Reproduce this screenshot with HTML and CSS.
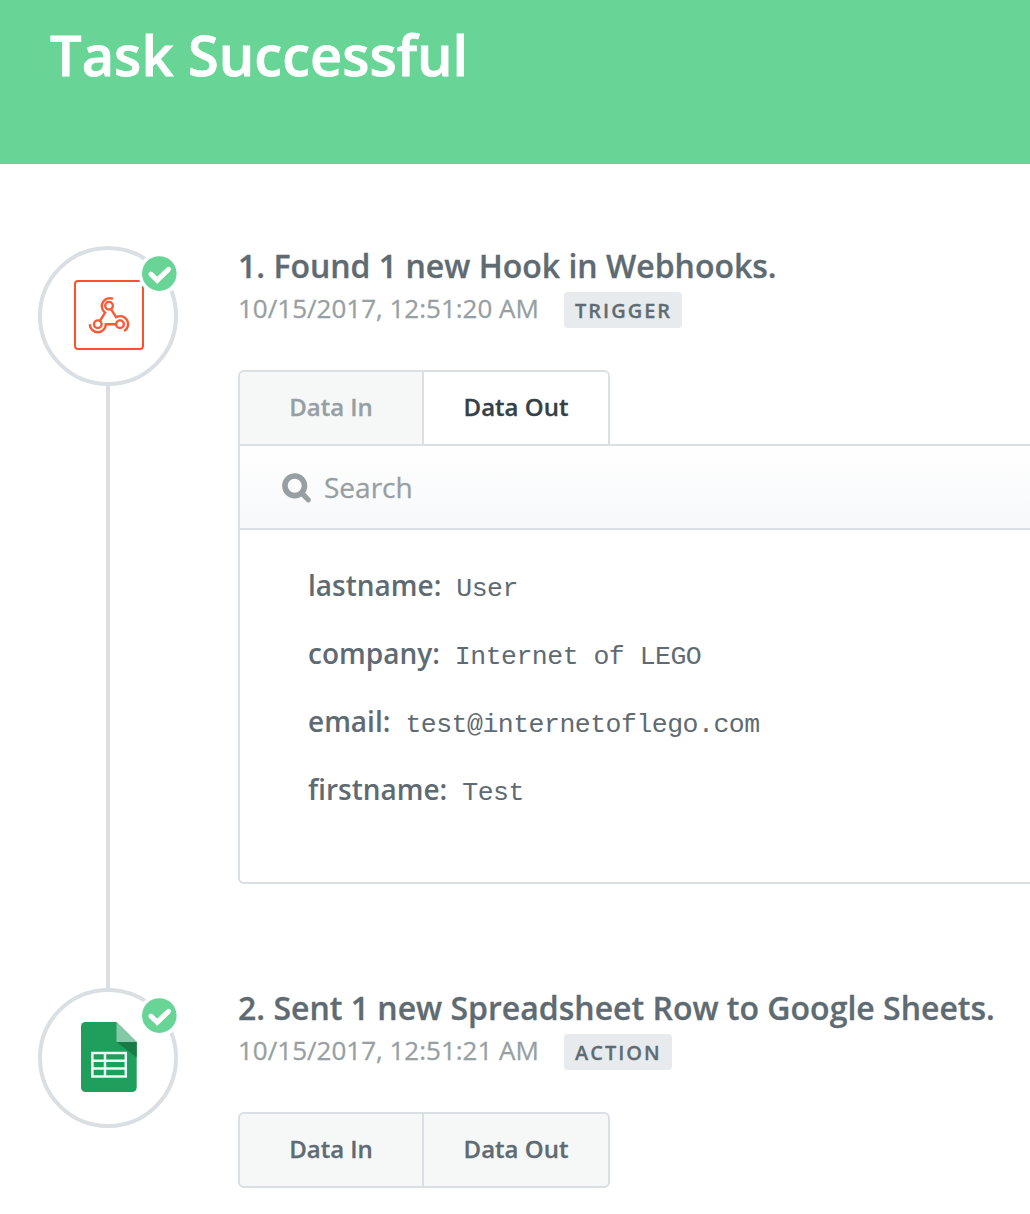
FILE: index.html
```html
<!DOCTYPE html>
<html lang="en">
<head>
<meta charset="utf-8">
<title>Task Successful</title>
<link rel="stylesheet" href="styles.css">
</head>
<body>
<header class="banner"><h1 class="banner-title">Task Successful</h1></header>
<main class="steps">
  <section class="step step-first">
    <div class="rail">
      <svg class="node" width="140" height="140" viewBox="0 0 140 140" fill="none">
        <circle cx="70" cy="70" r="68" stroke="#d9dfe2" stroke-width="4"/>
        <rect x="37" y="35" width="68" height="68" rx="3" stroke="#fc522c" stroke-width="2"/>
        <g stroke="#f85a35" stroke-width="2.4">
          <circle cx="71" cy="59.7" r="3.8"/><circle cx="59.8" cy="78.2" r="3.8"/><circle cx="82" cy="78.2" r="3.8"/>
          <path d="M75 52.8A8 8 0 0 0 67.1 66.6L61.9 75"/>
          <path d="M51.8 78.2A8 8 0 0 0 67.8 78.2H78"/>
          <path d="M73 63.1L78.1 71.2A8 8 0 0 1 86.2 85"/>
        </g>
        <circle cx="121.3" cy="27.6" r="21" fill="#fff"/>
        <circle cx="121.3" cy="27.6" r="17.3" fill="#68d597"/>
        <path d="M112.8 28L119.2 34.2L130.7 23.2" stroke="#fff" stroke-width="5"/>
        <path d="M112.8 28L119.2 34.2L130.7 23.2" stroke="#fff" stroke-width="4.6" stroke-linecap="round"/>
      </svg>
      <div class="line"></div>
    </div>
    <div class="content">
      <h2 class="step-title">1. Found 1 new Hook in Webhooks.</h2>
      <div class="meta"><span class="date">10/15/2017, 12:51:20 AM</span><span class="tag tag-trigger">TRIGGER</span></div>
      <div class="tabs tabs-open"><div class="tab tab-in muted">Data In</div><div class="tab active">Data Out</div></div>
      <div class="panel">
        <div class="search">
          <svg class="search-icon" width="30" height="32" viewBox="0 0 30 32" fill="none" stroke="#979fa3">
            <circle cx="12.7" cy="14.8" r="9.8" stroke-width="5.6"/><path d="M20 22.4L26.2 28.8" stroke-width="5.2" stroke-linecap="round"/>
          </svg>
          <span>Search</span>
        </div>
        <dl class="fields">
          <div class="field"><dt>lastname:</dt><dd>User</dd></div>
          <div class="field"><dt>company:</dt><dd>Internet of LEGO</dd></div>
          <div class="field"><dt>email:</dt><dd>test@internetoflego.com</dd></div>
          <div class="field"><dt>firstname:</dt><dd>Test</dd></div>
        </dl>
      </div>
    </div>
  </section>
  <section class="step">
    <div class="rail">
      <svg class="node" width="140" height="140" viewBox="0 0 140 140" fill="none">
        <circle cx="70" cy="70" r="68" stroke="#d9dfe2" stroke-width="4"/>
        <path d="M47.5 34H78.5L98.7 54V99.5a4.5 4.5 0 0 1-4.5 4.5H47.5a4.5 4.5 0 0 1-4.5-4.5V38.5a4.5 4.5 0 0 1 4.5-4.5Z" fill="#209e5b"/>
        <path d="M78.5 54H98.7V69.5Z" fill="#187b45"/>
        <path d="M78.5 34L98.7 54H78.5Z" fill="#84caa6"/>
        <path d="M54.4 65H87.8V88.4H54.4ZM54 72.7H88M54 80.5H88M67 65V88" stroke="#eef7f2" stroke-width="2.5"/>
        <circle cx="121.3" cy="27.6" r="21" fill="#fff"/>
        <circle cx="121.3" cy="27.6" r="17.3" fill="#68d597"/>
        <path d="M112.8 28L119.2 34.2L130.7 23.2" stroke="#fff" stroke-width="5"/>
        <path d="M112.8 28L119.2 34.2L130.7 23.2" stroke="#fff" stroke-width="4.6" stroke-linecap="round"/>
      </svg>
    </div>
    <div class="content">
      <h2 class="step-title">2. Sent 1 new Spreadsheet Row to Google Sheets.</h2>
      <div class="meta"><span class="date">10/15/2017, 12:51:21 AM</span><span class="tag tag-action">ACTION</span></div>
      <div class="tabs"><div class="tab tab-in">Data In</div><div class="tab">Data Out</div></div>
    </div>
  </section>
</main>
</body>
</html>
```
FILE: styles.css
```css
* { box-sizing: border-box; }
body { margin: 0; height: 1214px; overflow: hidden; background: #fff; color: #5f6b72; font-family: "Open Sans", sans-serif; }
h1, h2, dl, dd { margin: 0; }
.banner { height: 164px; padding: 14px 0 0 50px; background: #68d597; color: #fff; }
.banner-title { font-size: 56px; line-height: 80px; font-weight: 600; white-space: nowrap; -webkit-text-stroke: 0.8px #fff; }
.steps { padding: 82px 0 0 38px; }
.step { display: flex; }
.step-first { height: 742px; }
.rail { display: flex; flex-direction: column; align-items: center; width: 140px; margin-right: 60px; flex: none; }
.node { display: block; flex: none; }
.line { width: 4px; flex: 1; margin: -1px 0; background: #d9dfe2; }
.content { flex: 1; min-width: 0; }
.step-title { font-size: 32px; line-height: 40px; font-weight: 600; white-space: nowrap; -webkit-text-stroke: 0.3px; }
.meta { display: flex; height: 42px; padding-top: 6px; }
.date { width: 326px; font-size: 26px; line-height: 32px; color: #979fa3; white-space: nowrap; -webkit-text-stroke: 0.3px; }
.tag { height: 36px; padding-left: 11px; border-radius: 4px; background: #e7ebee; font-size: 20px; line-height: 38px; font-weight: 600; letter-spacing: 2px; -webkit-text-stroke: 0.3px; }
.tag-trigger { width: 118px; }
.tag-action { width: 108px; }
.tabs { display: flex; width: 372px; height: 76px; margin-top: 42px; border: 2px solid #d9dfe2; border-radius: 6px; background: #f6f8f8; overflow: hidden; }
.tabs-open { height: 74px; border-bottom: 0; border-radius: 6px 6px 0 0; }
.tab { flex: 1; font-size: 24px; line-height: 70px; font-weight: 600; text-align: center; -webkit-text-stroke: 0.3px; }
.tab-in { flex: none; width: 184px; border-right: 2px solid #d9dfe2; }
.muted { color: #979fa3; }
.active { background: #fff; color: #354047; }
.panel { height: 440px; border: 2px solid #d9dfe2; border-right: 0; border-radius: 0 0 0 6px; }
.search { display: flex; align-items: center; gap: 12px; height: 84px; padding-left: 42px; border-bottom: 2px solid #d9dfe2; background: linear-gradient(#fff, #f7f8fa); color: #979fa3; font-size: 28px; line-height: 40px; -webkit-text-stroke: 0.3px; }
.fields { padding: 21px 0 0 68px; }
.field { display: flex; align-items: baseline; gap: 15px; height: 68px; line-height: 68px; white-space: nowrap; }
.field dt { font-size: 28px; font-weight: 600; }
.field dd { font-family: "Liberation Mono", monospace; font-size: 26.5px; letter-spacing: -0.5px; }
```
